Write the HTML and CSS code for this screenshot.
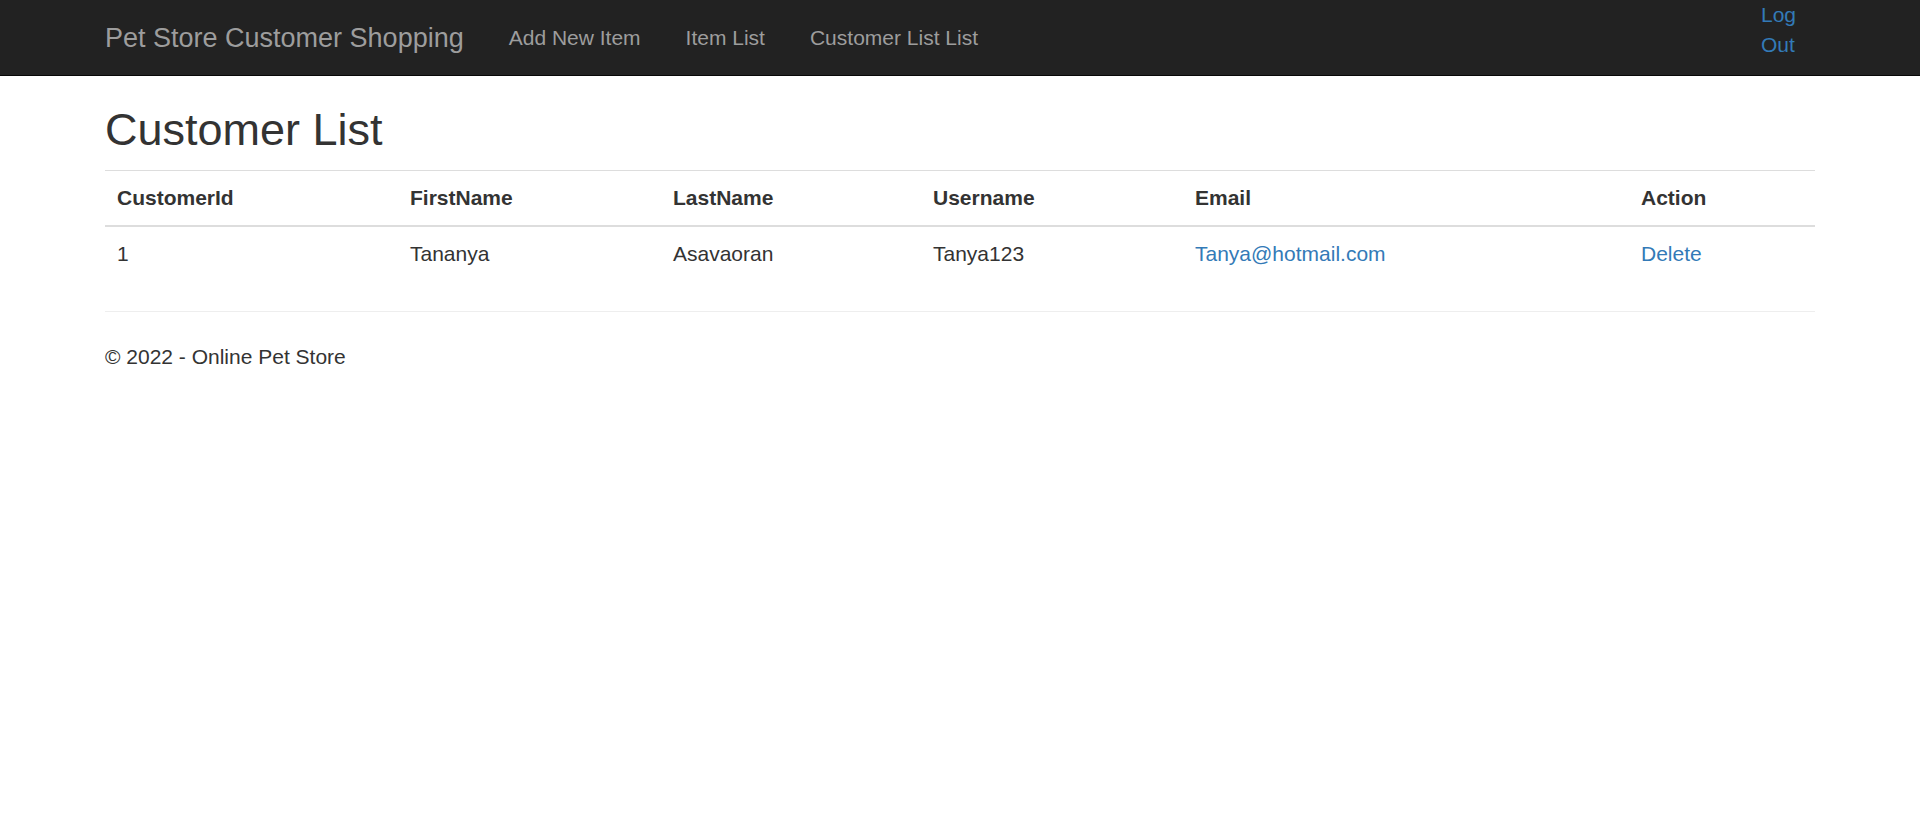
FILE: index.html
```html
<!DOCTYPE html>
<html lang="en">
<head>
<meta charset="utf-8">
<title>Customer List - Pet Store</title>
<link rel="stylesheet" href="styles.css">
</head>
<body>
<header class="navbar">
  <div class="container nav-inner">
    <a class="brand" href="#">Pet Store Customer Shopping</a>
    <ul class="nav-links">
      <li><a href="#">Add New Item</a></li>
      <li><a href="#">Item List</a></li>
      <li><a href="#">Customer List List</a></li>
    </ul>
    <div class="logout"><a href="#">Log Out</a></div>
  </div>
</header>
<main class="container body-content">
  <h2 class="page-title">Customer List</h2>
  <table class="table">
    <tr class="head-row">
      <th class="c1">CustomerId</th>
      <th class="c2">FirstName</th>
      <th class="c3">LastName</th>
      <th class="c4">Username</th>
      <th class="c5">Email</th>
      <th class="c6">Action</th>
    </tr>
    <tr>
      <td>1</td>
      <td>Tananya</td>
      <td>Asavaoran</td>
      <td>Tanya123</td>
      <td><a href="#">Tanya@hotmail.com</a></td>
      <td><a href="#">Delete</a></td>
    </tr>
  </table>
  <hr class="divider">
  <footer class="footer">
    <p>&copy; 2022 - Online Pet Store</p>
  </footer>
</main>
</body>
</html>
```

FILE: styles.css
```css
html, body {
  margin: 0;
  padding: 0;
}
body {
  font-family: "Liberation Sans", Arial, Helvetica, sans-serif;
  font-size: 21px;
  line-height: 30px;
  color: #333;
  background: #fff;
}
a {
  color: #337ab7;
  text-decoration: none;
}
.container {
  width: 1710px;
  margin: 0 auto;
}
.navbar {
  background: #222;
  border-bottom: 1px solid #080808;
  height: 75px;
}
.nav-inner {
  display: flex;
  align-items: flex-start;
  height: 75px;
}
.brand {
  display: block;
  color: #9d9d9d;
  font-size: 27px;
  line-height: 30px;
  padding: 22.5px 22.5px 22.5px 0;
}
.nav-links {
  display: flex;
  list-style: none;
  margin: 0;
  padding: 0;
}
.nav-links a {
  display: block;
  color: #9d9d9d;
  padding: 22.5px;
  line-height: 30px;
}
.logout {
  margin-left: auto;
  margin-right: 19px;
  width: min-content;
  line-height: 30px;
}
.page-title {
  font-size: 45px;
  font-weight: 500;
  line-height: 49.5px;
  margin: 29px 0 15px;
}
.table {
  width: 100%;
  border-collapse: collapse;
  border-spacing: 0;
  margin-bottom: 30px;
}
.table th,
.table td {
  text-align: left;
  padding: 12px;
  line-height: 30px;
  vertical-align: top;
  border-top: 1px solid #ddd;
}
.table th {
  font-weight: bold;
  border-bottom: 2px solid #ddd;
}
.c1 { width: 269px; }
.c2 { width: 239px; }
.c3 { width: 236px; }
.c4 { width: 238px; }
.c5 { width: 422px; }
.c6 { width: 162px; }
.divider {
  margin: 30px 0;
  border: 0;
  border-top: 1px solid #eee;
}
.footer p {
  margin: 0 0 15px;
}
```
